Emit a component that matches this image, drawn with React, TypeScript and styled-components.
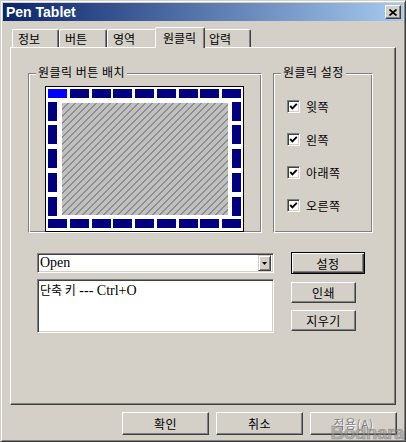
import React from "react";
import styled, { createGlobalStyle } from "styled-components";

const GlobalStyle = createGlobalStyle`
  html, body {
    margin: 0;
    padding: 0;
    background: #d4d0c8;
  }
  body {
    font-family: "Noto Sans CJK KR", "Liberation Sans", sans-serif;
    font-size: 12px;
    color: #000;
  }
`;

const Window = styled.div`
  position: relative;
  width: 406px;
  height: 442px;
  box-sizing: border-box;
  background: #d4d0c8;
  border: 1px solid;
  border-color: #d4d0c8 #404040 #404040 #d4d0c8;
  box-shadow: inset 1px 1px #fff, inset -1px -1px #808080;
  padding: 2px;
  display: flex;
  flex-direction: column;
  overflow: hidden;
`;

const TitleBar = styled.div`
  height: 18px;
  display: flex;
  align-items: center;
  justify-content: space-between;
  padding: 0 2px 0 3px;
  background: linear-gradient(to right, #0a246a, #a6caf0);
`;

const Title = styled.span`
  color: #fff;
  font-family: "Liberation Sans", Arial, sans-serif;
  font-weight: bold;
  font-size: 14px;
  line-height: 18px;
`;

const CloseButton = styled.div`
  width: 16px;
  height: 14px;
  box-sizing: border-box;
  background: #d4d0c8;
  border: 1px solid;
  border-color: #fff #404040 #404040 #fff;
  box-shadow: inset -1px -1px #808080;
  display: flex;
  align-items: center;
  justify-content: center;
`;

const Body = styled.div`
  padding: 6px 7px 0;
  display: flex;
  flex-direction: column;
`;

const TabRow = styled.div`
  display: flex;
  align-items: flex-end;
  height: 20px;
  padding-left: 2px;
`;

const Tab = styled.div<{ $w: number; $active?: boolean }>`
  position: relative;
  box-sizing: border-box;
  width: ${(p) => p.$w + (p.$active ? 4 : 0)}px;
  height: ${(p) => (p.$active ? 21 : 18)}px;
  margin: ${(p) => (p.$active ? "0 -2px -1px" : "0")};
  z-index: ${(p) => (p.$active ? 1 : 0)};
  padding-left: ${(p) => (p.$active ? 7 : 5)}px;
  padding-bottom: ${(p) => (p.$active ? 2 : 0)}px;
  background: #d4d0c8;
  border-top: 1px solid #fff;
  border-left: 1px solid #fff;
  border-right: 1px solid #404040;
  border-radius: 2px 2px 0 0;
  box-shadow: inset -1px 0 #808080;
  display: flex;
  align-items: center;
  white-space: nowrap;
`;

const Panel = styled.div`
  height: 358px;
  box-sizing: border-box;
  border: 1px solid;
  border-color: #fff #404040 #404040 #fff;
  box-shadow: inset -1px -1px #808080;
  padding: 25px 0 0 17px;
  display: flex;
  flex-direction: column;
`;

const TopRow = styled.div`
  display: flex;
  gap: 11px;
`;

const GroupBox = styled.div<{ $w: number }>`
  position: relative;
  box-sizing: border-box;
  width: ${(p) => p.$w}px;
  height: 160px;
  border: 1px solid;
  border-color: #808080 #fff #fff #808080;
  box-shadow: inset 1px 1px #fff, inset -1px -1px #808080;
`;

const Caption = styled.span`
  position: absolute;
  top: -10px;
  left: 7px;
  padding: 0 2px;
  background: #d4d0c8;
  line-height: 16px;
  letter-spacing: 0.5px;
  white-space: nowrap;
`;

const LayoutArea = styled.div`
  padding: 12px 0 0 16px;
`;

const Tablet = styled.div`
  width: 199px;
  height: 146px;
  box-sizing: border-box;
  border: 1px solid #000;
  padding: 2px 2px 3px;
  background: #fff;
  display: flex;
  flex-direction: column;
  justify-content: space-between;
`;

const KeyRow = styled.div`
  display: flex;
  justify-content: space-between;
`;

const KeyMiddle = styled.div`
  display: flex;
  height: 114px;
`;

const KeyColumn = styled.div`
  display: flex;
  flex-direction: column;
  justify-content: space-between;
`;

const Key = styled.div<{ $w: number; $h: number; $on?: boolean }>`
  width: ${(p) => p.$w}px;
  height: ${(p) => p.$h}px;
  background: ${(p) => (p.$on ? "#0000ff" : "#000080")};
`;

const Hatch = styled.div`
  flex: 1;
  margin: 1px 4px 1px 5px;
  background: repeating-linear-gradient(
    135deg,
    #c0c0c0 0px,
    #c0c0c0 3.95px,
    #8e8e8e 3.95px,
    #8e8e8e 4.95px
  );
`;

const CheckList = styled.div`
  display: flex;
  flex-direction: column;
  gap: 20px;
  padding: 26px 0 0 13px;
`;

const CheckRow = styled.label`
  display: flex;
  align-items: center;
  gap: 6px;
  height: 13px;
  letter-spacing: 0.5px;
  white-space: nowrap;
`;

const CheckBox = styled.span`
  width: 13px;
  height: 13px;
  box-sizing: border-box;
  border: 1px solid;
  border-color: #808080 #fff #fff #808080;
  box-shadow: inset 1px 1px #404040, inset -1px -1px #d4d0c8;
  background: #fff;
  display: flex;
  align-items: center;
  justify-content: center;
`;

const BottomRow = styled.div`
  display: flex;
  gap: 17px;
  margin: 20px 0 0 9px;
`;

const LeftCol = styled.div`
  width: 237px;
  display: flex;
  flex-direction: column;
  gap: 6px;
`;

const Sunken = styled.div`
  box-sizing: border-box;
  border: 1px solid;
  border-color: #808080 #fff #fff #808080;
  box-shadow: inset 1px 1px #404040, inset -1px -1px #d4d0c8;
  background: #fff;
  font-family: "Liberation Serif", "Noto Sans CJK KR", serif;
  font-size: 14px;
`;

const Hangul = styled.span`
  font-family: "Noto Sans CJK KR", sans-serif;
  font-size: 12px;
`;

const Combo = styled(Sunken)`
  height: 20px;
  display: flex;
  align-items: center;
  justify-content: space-between;
  padding: 0 2px 0 2px;
`;

const ComboArrow = styled.div`
  width: 13px;
  height: 16px;
  box-sizing: border-box;
  background: #d4d0c8;
  border: 1px solid;
  border-color: #d4d0c8 #404040 #404040 #d4d0c8;
  box-shadow: inset 1px 1px #fff, inset -1px -1px #808080;
  display: flex;
  align-items: center;
  justify-content: center;
`;

const ListBox = styled(Sunken)`
  height: 54px;
  padding: 1px 2px;
  line-height: 17px;
`;

const RightCol = styled.div`
  display: flex;
  flex-direction: column;
  align-items: flex-start;
  gap: 7px;
  margin-top: -1px;
`;

const Button = styled.button<{ $w: number; $h?: number; $default?: boolean }>`
  width: ${(p) => p.$w}px;
  height: ${(p) => p.$h ?? 21}px;
  box-sizing: border-box;
  padding: 0;
  margin: ${(p) => (p.$default ? "0 0 1px" : "0")};
  background: #d4d0c8;
  border: 1px solid;
  border-color: ${(p) =>
    p.$default ? "#000" : "#fff #404040 #404040 #fff"};
  box-shadow: ${(p) =>
    p.$default
      ? "inset 1px 1px #fff, inset -1px -1px #404040, inset -2px -2px #808080"
      : "inset -1px -1px #808080"};
  font-family: "Noto Sans CJK KR", "Liberation Sans", sans-serif;
  font-size: 12px;
  letter-spacing: 0.5px;
  color: ${(p) => (p.disabled ? "#808080" : "#000")};
  text-shadow: ${(p) => (p.disabled ? "1px 1px #fff" : "none")};
`;

const Footer = styled.div`
  display: flex;
  justify-content: flex-end;
  gap: 7px;
  margin: 7px -1px 0 0;
`;

const Watermark = styled.span`
  position: absolute;
  right: 1px;
  bottom: -3px;
  font-family: "Liberation Sans", Arial, sans-serif;
  font-weight: bold;
  font-size: 19px;
  letter-spacing: -0.5px;
  color: rgba(150, 150, 150, 0.55);
  -webkit-text-stroke: 0.6px rgba(90, 90, 90, 0.5);
  pointer-events: none;
`;

const Check = () => (
  <svg width="9" height="9" viewBox="0 0 9 9">
    <polyline
      points="1.2,4 3.4,6.3 7.8,1.8"
      fill="none"
      stroke="#000"
      strokeWidth="1.9"
    />
  </svg>
);

const tabs = [
  { label: "정보", w: 47 },
  { label: "버튼", w: 48 },
  { label: "영역", w: 50 },
  { label: "원클릭", w: 46, active: true },
  { label: "압력", w: 48 },
];

const sides = ["윗쪽", "왼쪽", "아래쪽", "오른쪽"];

export default function App() {
  const top = Array.from({ length: 9 });
  const side = Array.from({ length: 5 });
  return (
    <>
      <GlobalStyle />
      <Window>
        <TitleBar>
          <Title>Pen Tablet</Title>
          <CloseButton>
            <svg width="8" height="7" viewBox="0 0 8 7">
              <path d="M0.5 0.5 L7.5 6.5 M7.5 0.5 L0.5 6.5" stroke="#000" strokeWidth="1.7" />
            </svg>
          </CloseButton>
        </TitleBar>
        <Body>
          <TabRow>
            {tabs.map((t) => (
              <Tab key={t.label} $w={t.w} $active={t.active}>
                {t.label}
              </Tab>
            ))}
          </TabRow>
          <Panel>
            <TopRow>
              <GroupBox $w={234}>
                <Caption>원클릭 버튼 배치</Caption>
                <LayoutArea>
                  <Tablet>
                    <KeyRow>
                      {top.map((_, i) => (
                        <Key key={i} $w={19} $h={9} $on={i === 0} />
                      ))}
                    </KeyRow>
                    <KeyMiddle>
                      <KeyColumn>
                        {side.map((_, i) => (
                          <Key key={i} $w={9} $h={19} />
                        ))}
                      </KeyColumn>
                      <Hatch />
                      <KeyColumn>
                        {side.map((_, i) => (
                          <Key key={i} $w={9} $h={19} />
                        ))}
                      </KeyColumn>
                    </KeyMiddle>
                    <KeyRow>
                      {top.map((_, i) => (
                        <Key key={i} $w={19} $h={9} />
                      ))}
                    </KeyRow>
                  </Tablet>
                </LayoutArea>
              </GroupBox>
              <GroupBox $w={100}>
                <Caption>원클릭 설정</Caption>
                <CheckList>
                  {sides.map((s) => (
                    <CheckRow key={s}>
                      <CheckBox>
                        <Check />
                      </CheckBox>
                      {s}
                    </CheckRow>
                  ))}
                </CheckList>
              </GroupBox>
            </TopRow>
            <BottomRow>
              <LeftCol>
                <Combo>
                  <span>Open</span>
                  <ComboArrow>
                    <svg width="5" height="3" viewBox="0 0 5 3">
                      <polygon points="0,0 5,0 2.5,3" fill="#000" />
                    </svg>
                  </ComboArrow>
                </Combo>
                <ListBox>
                  <Hangul>단축 키</Hangul> --- Ctrl+O
                </ListBox>
              </LeftCol>
              <RightCol>
                <Button $w={74} $h={22} $default>
                  설정
                </Button>
                <Button $w={65}>인쇄</Button>
                <Button $w={65}>지우기</Button>
              </RightCol>
            </BottomRow>
          </Panel>
          <Footer>
            <Button $w={87} $h={23}>확인</Button>
            <Button $w={87} $h={23}>취소</Button>
            <Button $w={87} $h={23} disabled>
              적용(A)
            </Button>
          </Footer>
        </Body>
        <Watermark>Bodnara</Watermark>
      </Window>
    </>
  );
}
